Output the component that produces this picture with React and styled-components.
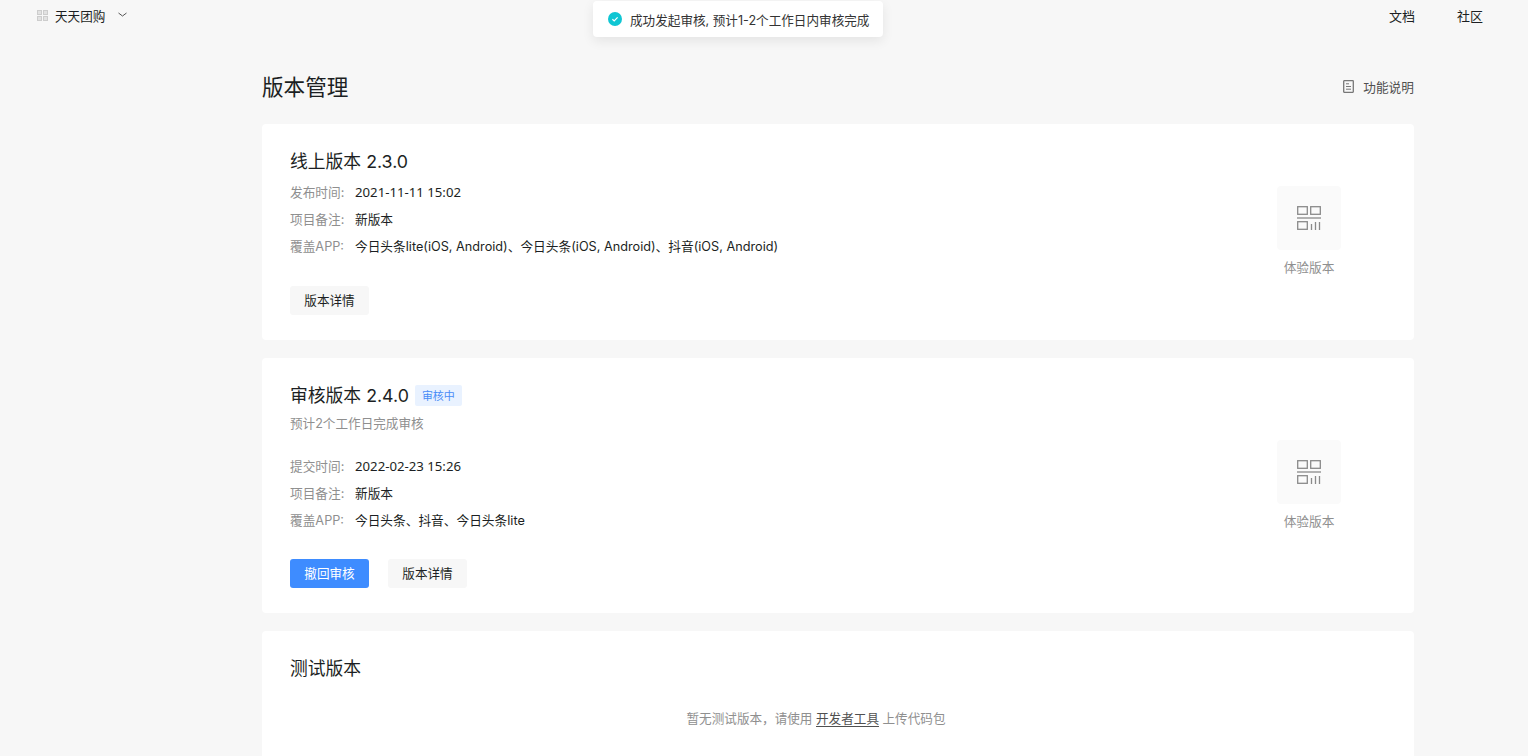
import React from "react";
import styled, { createGlobalStyle } from "styled-components";

const GlobalStyle = createGlobalStyle`
  html, body {
    margin: 0;
    padding: 0;
    height: 756px;
    overflow: hidden;
    background: #f7f7f7;
    font-family: Inter, "Noto Sans CJK SC", sans-serif;
    color: #1c1f23;
  }
  * { box-sizing: border-box; }
`;

const Page = styled.div`
  position: relative;
  height: 756px;
  overflow: hidden;
`;

const TopBar = styled.header`
  display: flex;
  align-items: center;
  justify-content: space-between;
  height: 30px;
  padding: 0 45px 0 37px;
  font-size: 12.6px;
`;

const Team = styled.div`
  display: flex;
  align-items: center;
  gap: 7px;
`;

const TopLinks = styled.nav`
  display: flex;
  gap: 42px;
  font-size: 13px;
`;

const Toast = styled.div`
  position: absolute;
  top: 1px;
  left: 593px;
  width: 290px;
  height: 36px;
  display: flex;
  align-items: center;
  gap: 8px;
  padding-left: 15px;
  background: #fff;
  border-radius: 4px;
  box-shadow: 0 4px 12px rgba(0, 0, 0, 0.08);
  font-size: 12.6px;
  color: #333;
  white-space: nowrap;
`;

const Main = styled.main`
  width: 1152px;
  margin-left: 262px;
`;

const HeadRow = styled.div`
  display: flex;
  align-items: center;
  justify-content: space-between;
  height: 94px;
  padding-top: 22px;
`;

const PageTitle = styled.h1`
  margin: -6px 0 0;
  font-size: 21.6px;
  font-weight: 400;
  color: #1c1f23;
`;

const DocLink = styled.a`
  display: flex;
  align-items: center;
  gap: 9px;
  margin-top: -4px;
  font-size: 12.7px;
  color: #505050;
`;

const Card = styled.section`
  display: flex;
  justify-content: space-between;
  height: ${(p) => p.$height}px;
  margin-bottom: 18px;
  padding: 24px 73px 0 28px;
  background: #fff;
  border-radius: 4px;
`;

const CardBody = styled.div`
  flex: 1;
`;

const TitleRow = styled.div`
  display: flex;
  align-items: center;
  gap: 6px;
  height: 26px;
`;

const CardTitle = styled.h2`
  margin: 0;
  padding-top: 1px;
  font-size: 17.8px;
  font-weight: 400;
  line-height: 26px;
`;

const Badge = styled.span`
  display: inline-flex;
  align-items: center;
  justify-content: center;
  width: 47px;
  height: 21px;
  background: #e9f2ff;
  border-radius: 2px;
  font-size: 11px;
  color: #4a8cf7;
`;

const Note = styled.p`
  margin: 4px 0 16px;
  font-size: 12.6px;
  line-height: 24px;
  color: #8f8f8f;
`;

const InfoList = styled.div`
  margin-top: ${(p) => p.$top || 0}px;
`;

const InfoRow = styled.div`
  display: flex;
  height: 27px;
  align-items: center;
  font-size: 12.7px;
`;

const InfoLabel = styled.span`
  width: 65px;
  flex-shrink: 0;
  color: #8f8f8f;
`;

const Stamp = styled.span`
  font-family: "Noto Sans", sans-serif;
  font-size: 13.2px;
`;

const Actions = styled.div`
  display: flex;
  gap: 19px;
  margin-top: ${(p) => p.$top}px;
`;

const Button = styled.button`
  width: 79px;
  height: 29px;
  padding: 0 0 2px;
  border: 0;
  border-radius: 3px;
  font-family: inherit;
  font-size: 12.6px;
  color: ${(p) => (p.$primary ? "#fff" : "#1c1f23")};
  background: ${(p) => (p.$primary ? "#3e8cff" : "#f7f7f7")};
`;

const Preview = styled.div`
  display: flex;
  flex-direction: column;
  align-items: center;
  gap: 8px;
  width: 64px;
  margin-top: ${(p) => p.$top}px;
`;

const QrBox = styled.div`
  display: flex;
  align-items: center;
  justify-content: center;
  width: 64px;
  height: 64px;
  background: #fafafa;
  border-radius: 4px;
`;

const PreviewLabel = styled.span`
  font-size: 12.7px;
  line-height: 19px;
  color: #8f8f8f;
  white-space: nowrap;
`;

const EmptyCard = styled.section`
  height: 200px;
  padding: 24px 72px 0 28px;
  background: #fff;
  border-radius: 4px;
`;

const EmptyText = styled.p`
  margin: 27px 0 0;
  text-align: center;
  font-size: 12.6px;
  line-height: 22px;
  color: #8f8f8f;
`;

const ToolLink = styled.a`
  color: #505050;
  text-decoration: underline;
  text-underline-offset: 3px;
`;

const TeamIcon = () => (
  <svg width="11" height="11" viewBox="0 0 11 11" fill="#e2e2e2" stroke="#cdcdcd" strokeWidth="1">
    <rect x="0.5" y="0.5" width="4" height="4" />
    <rect x="6.5" y="0.5" width="4" height="4" />
    <rect x="0.5" y="6.5" width="4" height="4" />
    <rect x="6.5" y="6.5" width="4" height="4" />
  </svg>
);

const Chevron = () => (
  <svg width="9" height="6" viewBox="0 0 9 6" fill="none" stroke="#555" strokeWidth="1" style={{ marginLeft: 6 }}>
    <path d="M.5 1l4 3 4-3" />
  </svg>
);

const CheckIcon = () => (
  <svg width="14" height="14" viewBox="0 0 14 14">
    <circle cx="7" cy="7" r="7" fill="#0fc6d3" />
    <path d="M4.4 7.2l1.8 1.7 3.4-3.5" fill="none" stroke="#fff" strokeWidth="1.2" />
  </svg>
);

const DocIcon = () => (
  <svg width="11" height="13" viewBox="0 0 11 13" fill="none" stroke="#777" strokeWidth="1.3">
    <rect x="0.7" y="0.7" width="9.6" height="11.6" rx="0.5" />
    <path d="M3 3.8h3M3 6.5h5M3 9.2h5" strokeWidth="1" />
  </svg>
);

const QrIcon = () => (
  <svg width="24" height="24" viewBox="0 0 24 24" fill="none" stroke="#8a8a8a" strokeWidth="1.3">
    <rect x="0.7" y="0.7" width="9.6" height="7.6" />
    <rect x="13.7" y="0.7" width="9.6" height="7.6" />
    <path d="M0 12h24" />
    <rect x="0.7" y="15.7" width="9.6" height="7.6" />
    <path d="M14.5 18v6M18.5 16v8M22.5 16v8" />
  </svg>
);

const PreviewBlock = ({ top }) => (
  <Preview $top={top}>
    <QrBox>
      <QrIcon />
    </QrBox>
    <PreviewLabel>体验版本</PreviewLabel>
  </Preview>
);

const Info = ({ label, children }) => (
  <InfoRow>
    <InfoLabel>{label}</InfoLabel>
    <span>{children}</span>
  </InfoRow>
);

export default function App() {
  return (
    <Page>
      <GlobalStyle />
      <TopBar>
        <Team>
          <TeamIcon />
          <span>天天团购</span>
          <Chevron />
        </Team>
        <TopLinks>
          <span>文档</span>
          <span>社区</span>
        </TopLinks>
      </TopBar>
      <Toast>
        <CheckIcon />
        成功发起审核, 预计1-2个工作日内审核完成
      </Toast>
      <Main>
        <HeadRow>
          <PageTitle>版本管理</PageTitle>
          <DocLink>
            <DocIcon />
            功能说明
          </DocLink>
        </HeadRow>
        <Card $height={216}>
          <CardBody>
            <TitleRow>
              <CardTitle>线上版本 2.3.0</CardTitle>
            </TitleRow>
            <InfoList $top={4}>
              <Info label="发布时间:"><Stamp>2021-11-11 15:02</Stamp></Info>
              <Info label="项目备注:">新版本</Info>
              <Info label="覆盖APP:">今日头条lite(iOS, Android)、今日头条(iOS, Android)、抖音(iOS, Android)</Info>
            </InfoList>
            <Actions $top={27}>
              <Button>版本详情</Button>
            </Actions>
          </CardBody>
          <PreviewBlock top={38} />
        </Card>
        <Card $height={255}>
          <CardBody>
            <TitleRow>
              <CardTitle>审核版本 2.4.0</CardTitle>
              <Badge>审核中</Badge>
            </TitleRow>
            <Note>预计2个工作日完成审核</Note>
            <InfoList>
              <Info label="提交时间:"><Stamp>2022-02-23 15:26</Stamp></Info>
              <Info label="项目备注:">新版本</Info>
              <Info label="覆盖APP:">今日头条、抖音、今日头条lite</Info>
            </InfoList>
            <Actions $top={26}>
              <Button $primary>撤回审核</Button>
              <Button>版本详情</Button>
            </Actions>
          </CardBody>
          <PreviewBlock top={58} />
        </Card>
        <EmptyCard>
          <TitleRow>
            <CardTitle>测试版本</CardTitle>
          </TitleRow>
          <EmptyText>
            暂无测试版本，请使用 <ToolLink>开发者工具</ToolLink> 上传代码包
          </EmptyText>
        </EmptyCard>
      </Main>
    </Page>
  );
}
